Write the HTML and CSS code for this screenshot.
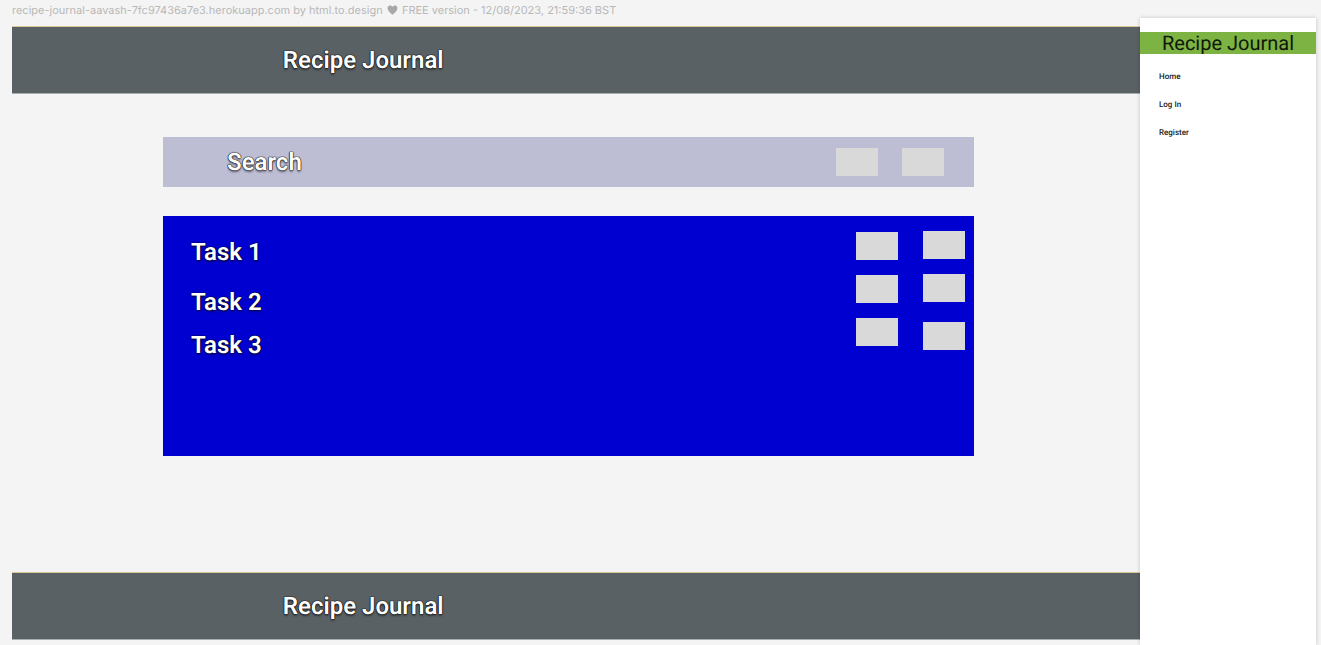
FILE: index.html
```html
<!DOCTYPE html>
<html lang="en">
<head>
<meta charset="utf-8">
<meta name="viewport" content="width=device-width, initial-scale=1">
<title>Recipe Journal</title>
<link rel="stylesheet" href="styles.css">
</head>
<body>
<div class="page">
  <div class="content">
    <p class="caption">recipe-journal-aavash-7fc97436a7e3.herokuapp.com by html.to.design <svg class="heart" viewBox="0 0 12 11" aria-hidden="true"><path d="M6 10.6C4 9 .8 6.700.6 3.900C.5 1.900 1.700.6 3.300.6C4.500.6 5.500 1.200 6 2.200C6.500 1.200 7.500.6 8.700.6C10.300.6 11.500 1.900 11.400 3.900C11.200 6.700 8 9 6 10.600Z"/></svg> FREE version - 12/08/2023, 21:59:36 BST</p>
    <header class="bar"><h1 class="heading">Recipe Journal</h1></header>
    <main class="main">
      <form class="search">
        <input class="heading search-field" type="search" placeholder="Search" aria-label="Search">
        <button class="box" type="button" aria-label="Search"></button>
        <button class="box" type="button" aria-label="Clear"></button>
      </form>
      <section class="tasks">
        <ul class="task-list">
          <li class="heading">Task 1</li>
          <li class="heading">Task 2</li>
          <li class="heading">Task 3</li>
        </ul>
        <div class="actions">
          <button class="box" type="button" aria-label="Edit task 1"></button>
          <button class="box" type="button" aria-label="Edit task 2"></button>
          <button class="box" type="button" aria-label="Edit task 3"></button>
        </div>
        <div class="actions actions-end">
          <button class="box" type="button" aria-label="Delete task 1"></button>
          <button class="box" type="button" aria-label="Delete task 2"></button>
          <button class="box" type="button" aria-label="Delete task 3"></button>
        </div>
      </section>
    </main>
    <footer class="bar"><p class="heading">Recipe Journal</p></footer>
  </div>
  <aside class="sidebar">
    <h2 class="brand">Recipe Journal</h2>
    <nav class="nav">
      <a href="#">Home</a>
      <a href="#">Log In</a>
      <a href="#">Register</a>
    </nav>
  </aside>
</div>
</body>
</html>
```
FILE: styles.css
```css
* {
  box-sizing: border-box;
}

body {
  margin: 0;
  background: #f4f4f4;
  font-family: Roboto, "Liberation Sans", sans-serif;
  text-rendering: geometricPrecision;
}

h1, h2, p, ul {
  margin: 0;
  padding: 0;
  list-style: none;
}

.page {
  display: grid;
  grid-template-columns: 1fr 176px;
  min-height: 100vh;
  padding: 0 5px 0 12px;
}

.content {
  padding-bottom: 5px;
}

.caption {
  height: 26px;
  color: #b8b8b8;
  font-family: Inter, "Liberation Sans", sans-serif;
  font-size: 11px;
  line-height: 20px;
}

.heart {
  width: 11px;
  height: 10px;
  margin: 0 1px;
  vertical-align: -1px;
  fill: #a8a8a8;
}

.bar {
  padding: 19px 24%;
  border-top: 1px solid #dbc795;
  border-bottom: 1px solid #a9adae;
  background: #5a6164;
}

.heading {
  color: #fff;
  font-family: Roboto, "Liberation Sans", sans-serif;
  font-size: 24px;
  font-weight: 600;
  line-height: 28px;
  text-rendering: geometricPrecision;
  text-shadow: 0 0 1px #000, 0 0 1px #000, 0 0 1px #000, 0 2px 2px rgb(0 0 0 / 40%);
}

.main {
  padding: 43px 166px 116px 151px;
}

.search {
  display: flex;
  align-items: center;
  gap: 24px;
  height: 50px;
  margin-bottom: 29px;
  padding: 0 30px 0 64px;
  background: #bdbdd4;
}

.search-field {
  flex: 1;
  min-width: 0;
  padding: 0;
  border: 0;
  outline: 0;
  background: none;
  appearance: none;
}

.search-field::placeholder {
  color: #fff;
  opacity: 1;
}

.box {
  width: 42px;
  height: 28px;
  padding: 0;
  border: 0;
  background: #d9d9d9;
}

.tasks {
  display: flex;
  gap: 25px;
  min-height: 240px;
  padding: 15px 9px 15px 28px;
  background: #0000d1;
}

.task-list {
  flex: 1;
  padding-top: 7px;
}

.task-list li:nth-child(2) {
  margin: 22px 0 15px;
}

.actions {
  display: flex;
  flex-direction: column;
  gap: 15px;
  padding-top: 1px;
}

.actions-end {
  padding-top: 0;
}

.actions-end .box:last-child {
  margin-top: 5px;
}

.sidebar {
  margin-top: 18px;
  padding-top: 14px;
  background: #fff;
  box-shadow: 0 0 4px rgb(0 0 0 / 20%);
}

.brand {
  background: #7cb342;
  color: #10180a;
  font-size: 20px;
  font-weight: 400;
  line-height: 22px;
  text-align: center;
}

.nav {
  display: flex;
  flex-direction: column;
  gap: 16px;
  padding: 17px 19px;
}

.nav a {
  color: #212121;
  font-size: 8px;
  font-weight: 500;
  line-height: 12px;
  text-decoration: none;
}
```
